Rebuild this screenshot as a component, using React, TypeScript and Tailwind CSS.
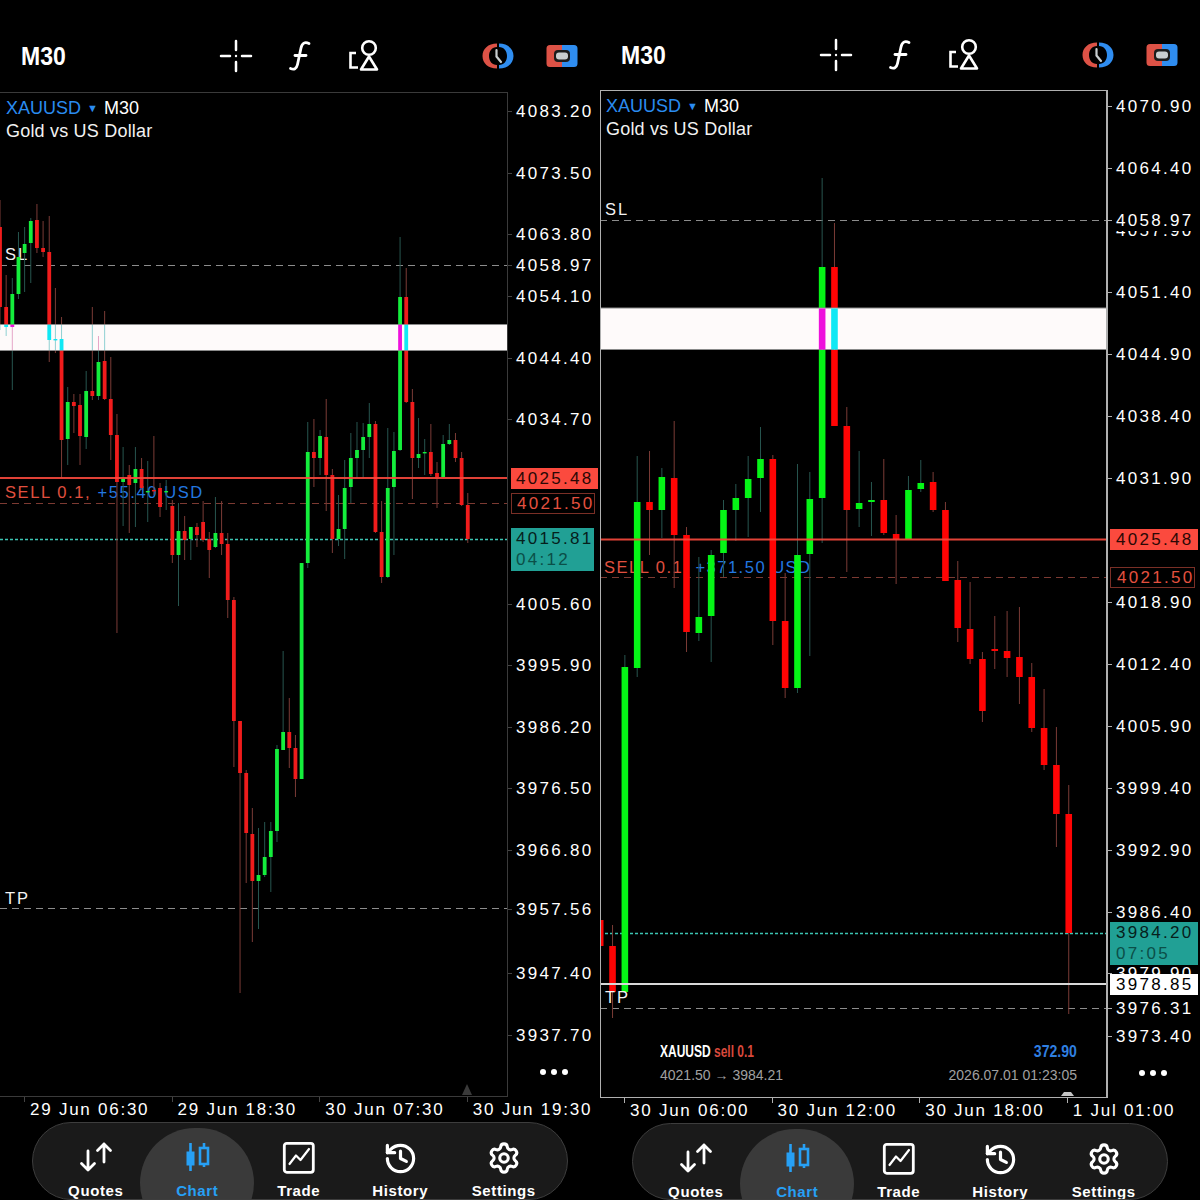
import { History, Settings } from "lucide-react";

type C = [number, "g" | "r", number, number, number, number];

const leftC: C[] = [
  [0,"r",227,307,200,330],[1,"r",307,327,275,336],[2,"g",294,327,278,390],[3,"g",257,294,232,299],[4,"g",244,253,227,292],
  [5,"g",221,243,218,283],[6,"r",220,248,204,253],[7,"r",248,252,221,257],[8,"r",252,340,216,362],[9,"r",339,340,288,353],
  [10,"r",339,440,317,478],[11,"g",402,439,387,465],[12,"r",402,406,394,433],[13,"r",405,436,394,465],[14,"g",391,437,371,449],
  [15,"r",391,396,307,400],[16,"g",362,396,336,400],[17,"r",361,399,311,400],[18,"r",399,435,357,460],[19,"r",435,482,414,633],
  [20,"g",479,482,447,526],[21,"r",475,485,465,533],[22,"g",469,483,447,527],[23,"r",469,488,458,490],[24,"g",491,492,461,522],
  [25,"r",490,491,436,495],[26,"r",488,507,483,517],[27,"g",491,492,480,510],[28,"r",506,555,500,563],[29,"g",531,555,503,606],
  [30,"r",531,540,516,560],[31,"g",527,539,527,560],[32,"r",527,535,523,547],[33,"r",522,540,501,542],[34,"r",539,550,532,578],
  [35,"g",533,547,497,548],[36,"r",533,544,501,555],[37,"r",544,600,533,618],[38,"r",600,721,597,767],[39,"r",721,773,721,993],
  [40,"r",773,833,770,883],[41,"r",834,881,808,942],[42,"g",875,881,828,929],[43,"g",857,875,822,877],[44,"g",831,857,822,892],
  [45,"g",749,831,745,842],[46,"g",732,750,651,750],[47,"r",732,748,698,768],[48,"r",748,779,735,797],[49,"g",563,779,563,779],
  [50,"g",452,563,422,568],[51,"r",452,458,419,487],[52,"g",436,458,430,475],[53,"r",437,475,399,511],[54,"r",475,539,469,553],
  [55,"g",529,539,495,546],[56,"g",488,529,460,559],[57,"g",458,487,433,503],[58,"g",450,458,422,478],[59,"g",437,450,423,478],
  [60,"g",424,437,403,458],[61,"r",424,532,421,533],[62,"r",532,577,501,583],[63,"g",488,577,428,578],[64,"g",451,487,432,555],
  [65,"g",297,450,237,451],[66,"r",297,402,268,403],[67,"r",402,458,389,499],[68,"g",454,458,418,468],[69,"g",452,453,439,475],
  [70,"r",452,474,424,476],[71,"r",473,477,462,508],[72,"g",444,477,435,478],[73,"g",440,444,424,445],[74,"r",440,458,433,462],
  [75,"r",458,505,452,506],[76,"r",505,539,493,543],
];

const rightX = (j: number) => 600.2 + j * 12.33;
const rightC: C[] = [
  [0,"r",920,946,915,950],[1,"r",946,992,925,1018],[2,"g",667,992,655,992],[3,"g",502,668,456,677],[4,"r",502,510,451,555],
  [5,"g",477,510,468,538],[6,"r",478,535,421,588],[7,"r",535,632,527,652],[8,"g",617,633,557,641],[9,"g",555,616,550,662],
  [10,"g",510,553,500,577],[11,"g",498,510,484,541],[12,"g",479,498,456,537],[13,"g",459,478,427,512],[14,"r",459,621,455,645],
  [15,"r",621,688,573,698],[16,"g",555,688,464,693],[17,"g",499,554,472,656],[18,"g",267,498,178,543],[19,"r",267,426,223,426],
  [20,"r",426,510,407,572],[21,"g",503,509,451,527],[22,"g",500,502,482,536],[23,"r",500,533,459,535],[24,"r",534,539,515,584],
  [25,"g",490,539,476,539],[26,"g",483,489,460,492],[27,"r",482,510,472,512],[28,"r",510,581,502,581],[29,"r",580,628,561,642],
  [30,"r",629,659,582,664],[31,"r",659,711,652,722],[32,"r",649,651,616,669],[33,"r",651,658,611,677],[34,"r",657,677,607,704],
  [35,"r",677,728,663,732],[36,"r",728,765,689,770],[37,"r",765,814,727,847],[38,"r",814,933,785,1014],
];

type Kind = "plain" | "sell" | "entry" | "teal" | "white";
type L = { y: number; t: string; k?: Kind; s?: string; w?: number };

const leftAxis: L[] = [
  { y: 111, t: "4083.20" },{ y: 173, t: "4073.50" },{ y: 234, t: "4063.80" },{ y: 265.5, t: "4058.97" },{ y: 296, t: "4054.10" },
  { y: 358, t: "4044.40" },{ y: 419, t: "4034.70" },{ y: 604, t: "4005.60" },{ y: 665, t: "3995.90" },{ y: 727, t: "3986.20" },
  { y: 788, t: "3976.50" },{ y: 850, t: "3966.80" },{ y: 909, t: "3957.56" },{ y: 973, t: "3947.40" },{ y: 1035, t: "3937.70" },
  { y: 478, t: "4025.48", k: "sell", w: 87 },{ y: 503.5, t: "4021.50", k: "entry", w: 84 },
  { y: 539, t: "4015.81", k: "teal", s: "04:12", w: 83 },
];
const rightAxis: L[] = [
  { y: 230, t: "4057.90" },{ y: 106, t: "4070.90" },{ y: 168, t: "4064.40" },{ y: 220, t: "4058.97" },{ y: 292, t: "4051.40" },
  { y: 354, t: "4044.90" },{ y: 416, t: "4038.40" },{ y: 478, t: "4031.90" },{ y: 602, t: "4018.90" },{ y: 664, t: "4012.40" },
  { y: 726, t: "4005.90" },{ y: 788, t: "3999.40" },{ y: 850, t: "3992.90" },{ y: 912, t: "3986.40" },{ y: 973, t: "3979.90" },
  { y: 1008, t: "3976.31" },{ y: 1036, t: "3973.40" },
  { y: 539.5, t: "4025.48", k: "sell", w: 88 },{ y: 577.5, t: "4021.50", k: "entry", w: 85 },
  { y: 933, t: "3984.20", k: "teal", s: "07:05", w: 88 },{ y: 984, t: "3978.85", k: "white", w: 88 },
];

function Crosshair() {
  return (
    <svg width="40" height="40" viewBox="0 0 40 40" fill="none" stroke="#fff" strokeWidth="2.5" strokeLinecap="round">
      <path d="M5 20H14M26 20H35M20 5V14M20 26V35" />
      <circle cx="20" cy="20" r="1.2" fill="#fff" stroke="none" />
    </svg>
  );
}
function Fx() {
  return (
    <svg width="40" height="40" viewBox="0 0 40 40" fill="none" stroke="#fff" strokeWidth="2.8" strokeLinecap="round">
      <path d="M29 7.500C25 5.500 22 7 21 12L17.500 28.500C16.500 33 14 34 10.500 32.500" />
      <path d="M15 19.500H26" />
    </svg>
  );
}
function Objects() {
  return (
    <svg width="40" height="40" viewBox="0 0 40 40" fill="none" stroke="#fff" strokeWidth="2.6">
      <circle cx="26" cy="12" r="6.800" />
      <path d="M26 20.500L34 33.500H18Z" strokeLinejoin="round" />
      <path d="M13 17H7.500V31.500H15" />
    </svg>
  );
}
function ClockBadge() {
  return (
    <svg width="40" height="40" viewBox="0 0 40 40" fill="none">
      <path d="M19 7.500C10 7.500 4.500 13 4.500 20C4.500 27 10 32.500 19 32.500L19 29C14 29 11 25 11 20C11 15 14 11 19 11Z" fill="#dd5246" />
      <path d="M21 7.500C30 7.500 35.500 13 35.500 20C35.500 27 30 32.500 21 32.500L21 29C26 29 29 25 29 20C29 15 26 11 21 11Z" fill="#2f8df0" />
      <path d="M18.500 14V20.500L23 26" stroke="#c9ced0" strokeWidth="2.200" strokeLinecap="round" />
    </svg>
  );
}
function ToggleBadge() {
  return (
    <svg width="40" height="40" viewBox="0 0 40 40">
      <path d="M9 9H21V31H9A3.500 3.500 0 0 1 5.500 27.500V12.500A3.500 3.500 0 0 1 9 9Z" fill="#dd5246" />
      <path d="M21 9H33A3.500 3.500 0 0 1 36.500 12.500V27.500A3.500 3.500 0 0 1 33 31H21Z" fill="#2f8df0" />
      <rect x="13" y="14" width="16" height="12" rx="4" fill="#1c1c1c" />
      <rect x="15" y="16.500" width="12" height="7" rx="3" fill="#c9ced0" />
    </svg>
  );
}
function QuotesIcon() {
  return (
    <svg width="36" height="34" viewBox="0 0 36 34" fill="none" stroke="#fff" strokeWidth="2.800" strokeLinecap="round" strokeLinejoin="round">
      <path d="M10 10V29M3.500 22.500L10 29L16.500 22.500" />
      <path d="M26 3V21M19.500 9.500L26 3L32.500 9.500" />
    </svg>
  );
}
function ChartIcon() {
  return (
    <svg width="36" height="34" viewBox="0 0 36 34" fill="none" stroke="#27a0f5" strokeWidth="2.600">
      <path d="M11.500 2V30M25 2V26" />
      <rect x="7.500" y="10.500" width="8" height="14" fill="#27a0f5" stroke="none" />
      <rect x="21" y="7" width="8" height="16" fill="#3a3a3a" />
    </svg>
  );
}
function TradeIcon() {
  return (
    <svg width="36" height="34" viewBox="0 0 36 34" fill="none" stroke="#fff" strokeWidth="2.800" strokeLinejoin="round">
      <rect x="3.300" y="2.300" width="29" height="29" rx="2.500" />
      <path d="M8.500 23L15 14.500L19.500 19L28 8" strokeLinecap="round" strokeWidth="2.200" />
    </svg>
  );
}

const navItems = [
  { label: "Quotes", icon: <QuotesIcon />, cls: "relative w-[101.500px] flex flex-col items-center pt-[18px]" },
  { label: "Chart", icon: <ChartIcon />, active: true, cls: "relative w-[101.500px] flex flex-col items-center pt-[18px]" },
  { label: "Trade", icon: <TradeIcon />, cls: "relative w-[101.500px] flex flex-col items-center pt-[18px]" },
  { label: "History", icon: <History size={35} strokeWidth={2.2} color="#fff" />, cls: "relative w-[101.500px] flex flex-col items-center pt-[18px]" },
  { label: "Settings", icon: <Settings size={34} strokeWidth={2.2} color="#fff" />, cls: "relative w-[101.500px] ml-[2px] flex flex-col items-center pt-[18px]" },
];

function BottomNav() {
  return (
    <div className="mx-[32px] w-[536px] h-[120px] rounded-[58px] bg-[#1a1a1a] border border-[#3d3d3d] pl-[12px] flex overflow-hidden">
      {navItems.map((n) => (
        <div key={n.label} className={n.cls}>
          {n.active && <div className="absolute top-[5px] left-[-6.500px] w-[114px] h-[110px] rounded-[57px] bg-[#3a3a3a]" />}
          <div className="relative h-[34px] flex items-center justify-center">{n.icon}</div>
          <div className={n.active ? "relative mt-[6px] text-[15px] leading-[20px] font-bold tracking-[0.6px] text-[#27a0f5]" : "relative mt-[6px] text-[15px] leading-[20px] font-bold tracking-[0.6px] text-white"}>
            {n.label}
          </div>
        </div>
      ))}
    </div>
  );
}

function AxisLabel({ l, top, tick, tagLeft, tagPad }: { l: L; top: number; tick: string; tagLeft: string; tagPad: string }) {
  const base = "absolute whitespace-nowrap text-[17px] tracking-[2.300px]";
  if (l.k === "teal") {
    return (
      <div className={`${base} ${tagLeft} ${tagPad} bg-[#21a095] text-[#06201c] h-[43px] leading-[21px]`} style={{ top: l.y - top - 11, width: l.w }}>
        <div>{l.t}</div>
        <div className="text-[#0b4f48]">{l.s}</div>
      </div>
    );
  }
  if (l.k) {
    const c =
      l.k === "sell" ? "bg-[#fb4a3e] text-[#2a0805]" : l.k === "entry" ? "bg-black border border-[#7a2f26] text-[#e4503f]" : "bg-white text-black";
    return (
      <div className={`${base} ${tagLeft} ${tagPad} ${c} h-[21px] leading-[21px] flex items-center`} style={{ top: l.y - top - 10.5, width: l.w }}>
        {l.t}
      </div>
    );
  }
  return (
    <div className={`${base} left-0 pl-[8px] pr-[1px] bg-black text-white h-[21px] leading-[21px]`} style={{ top: l.y - top - 10.5 }}>
      <div className={`absolute left-0 top-[10px] w-[4px] h-px ${tick}`} />
      {l.t}
    </div>
  );
}

function Candles({ data, x, bw, pid, band }: { data: C[]; x: (i: number) => number; bw: number; pid: string; band: [number, number] }) {
  const red = pid === "l" ? "#f01c1c" : "#ff0404";
  const green = pid === "l" ? "#14ee3c" : "#05f516";
  return (
    <>
      {data.map(([i, c, t, b, wt, wb]) => (
        <g key={i}>
          <rect x={x(i) - 0.5} y={wt} width={1} height={wb - wt} fill={c === "r" ? "#7a3b36" : "#27554f"} />
          <rect x={x(i) - bw / 2} y={t} width={bw} height={Math.max(b - t, 1.4)} fill={c === "r" ? red : green} />
        </g>
      ))}
      <rect x={-10} y={band[0]} width={1300} height={band[1] - band[0]} fill="#fefafa" stroke="#8a8a8a" strokeWidth={1} />
      <g clipPath={`url(#band-${pid})`}>
        {data.map(([i, c, t, b, wt, wb]) => (
          <g key={i}>
            <rect x={x(i) - 0.5} y={wt} width={1} height={wb - wt} fill={c === "r" ? "#8fd0d2" : "#e6a6c8"} />
            <rect x={x(i) - bw / 2} y={t} width={bw} height={Math.max(b - t, 1.4)} fill={c === "r" ? "#10e8f4" : "#ee10dc"} />
          </g>
        ))}
      </g>
    </>
  );
}

function LeftPanel() {
  const top = 92;
  const x = (i: number) => i * 6.155;
  return (
    <div className="w-[600px] h-[1200px] flex flex-col shrink-0">
      <Header pt="pt-[36px]" h="h-[92px]" />
      <div className="flex h-[1005px]">
        <div className="relative w-[508px] h-[1005px] border border-l-0 border-[#3a3a3a] overflow-hidden">
          <div className="absolute left-[6px] top-[3px] text-[18px] leading-[24px] whitespace-nowrap text-white">
            <span className="text-[#2a8cf0]">XAUUSD</span>
            <span className="text-[#2a8cf0] text-[11px] mx-[6px] align-[2px]">▼</span>
            <span>M30</span>
          </div>
          <div className="absolute left-[6px] top-[26px] text-[18px] leading-[24px] tracking-[0.2px] whitespace-nowrap text-[#f2f2f2]">Gold vs US Dollar</div>
          <div className="absolute left-[5px] top-[151px] text-[16.500px] leading-[20px] tracking-[2px] text-[#f2f2f2]">SL</div>
          <div className="absolute left-[5px] top-[795px] text-[16.500px] leading-[20px] tracking-[2px] text-[#f2f2f2]">TP</div>
          <div className="absolute left-[5px] top-[389px] text-[16.500px] leading-[20px] tracking-[1.600px] whitespace-nowrap">
            <span className="text-[#e0503f]">SELL 0.1, </span>
            <span className="text-[#2378e0]">+55.40 USD</span>
          </div>
          <svg className="absolute left-0 top-[-1px]" width="507" height="1005" viewBox={`0 ${top} 507 1005`}>
            <defs>
              <clipPath id="band-l"><rect x="0" y="325" width="507" height="25" /></clipPath>
            </defs>
            <path d="M0 265.500H507" stroke="#8c8c8c" strokeDasharray="7 5" />
            <path d="M0 908.500H507" stroke="#8c8c8c" strokeDasharray="7 5" />
            <path d="M0 503.500H507" stroke="#7c3a32" strokeDasharray="7 5" />
            <path d="M0 539.500H507" stroke="#3cc4b2" strokeDasharray="3 2" strokeWidth="1.300" />
            <Candles data={leftC} x={x} bw={3.8} pid="l" band={[324.5, 350.5]} />
            <path d="M0 478H507" stroke="#f5483c" strokeWidth="2" opacity="0.92" />
            <path d="M462 1095L467 1084L472 1095Z" fill="#3a3a3a" />
          </svg>
        </div>
        <div className="relative w-[92px] h-[1005px]">
          {leftAxis.map((l) => (
            <AxisLabel key={l.t} l={l} top={top} tick="bg-[#444]" tagLeft="left-[3px]" tagPad="pl-[5px]" />
          ))}
          <div className="absolute left-[32px] top-[977px] flex gap-[5.500px]">
            <div className="w-[5.500px] h-[5.500px] rounded-full bg-white" />
            <div className="w-[5.500px] h-[5.500px] rounded-full bg-white" />
            <div className="w-[5.500px] h-[5.500px] rounded-full bg-white" />
          </div>
        </div>
      </div>
      <TimeAxis ticks={["29 Jun 06:30", "29 Jun 18:30", "30 Jun 07:30", "30 Jun 19:30"]} tick="bg-[#444]" />
      <BottomNav />
    </div>
  );
}

function RightPanel() {
  const top = 90;
  return (
    <div className="w-[600px] h-[1200px] flex flex-col shrink-0">
      <Header pt="pt-[35px]" h="h-[90px]" />
      <div className="flex h-[1008px]">
        <div className="relative w-[508px] h-[1008px] border border-[#b0b0b0] border-r-2 overflow-hidden">
          <div className="absolute left-[5px] top-[3px] text-[18px] leading-[24px] whitespace-nowrap text-white">
            <span className="text-[#2a8cf0]">XAUUSD</span>
            <span className="text-[#2a8cf0] text-[11px] mx-[6px] align-[2px]">▼</span>
            <span>M30</span>
          </div>
          <div className="absolute left-[5px] top-[26px] text-[18px] leading-[24px] tracking-[0.2px] whitespace-nowrap text-[#f2f2f2]">Gold vs US Dollar</div>
          <div className="absolute left-[4px] top-[108px] text-[16.500px] leading-[20px] tracking-[2px] text-[#f2f2f2]">SL</div>
          <div className="absolute left-[3px] top-[466px] text-[16.500px] leading-[20px] tracking-[1.500px] whitespace-nowrap">
            <span className="text-[#e0503f]">SELL 0.1, </span>
            <span className="text-[#2378e0]">+371.50 USD</span>
          </div>
          <div className="absolute left-[59px] top-[951px] w-[417px] flex justify-between items-center h-[20px] text-[16px]">
            <div className="whitespace-nowrap origin-left scale-x-[0.75] font-bold">
              <span className="text-white">XAUUSD </span>
              <span className="text-[#d8493c]">sell 0.1</span>
            </div>
            <div className="whitespace-nowrap origin-right scale-x-[0.88] text-[#2f7fe0] font-bold">372.90</div>
          </div>
          <div className="absolute left-[59px] top-[974px] w-[417px] flex justify-between items-center h-[20px] text-[14px] text-[#a0a0a0]">
            <div className="whitespace-nowrap">4021.50 → 3984.21</div>
            <div className="whitespace-nowrap">2026.07.01 01:23:05</div>
          </div>
          <svg className="absolute left-[-1px] top-[-1px]" width="508" height="1008" viewBox={`600 ${top} 508 1008`}>
            <defs>
              <clipPath id="band-r"><rect x="600" y="308.500" width="507" height="41" /></clipPath>
            </defs>
            <path d="M600 220.500H1107" stroke="#8c8c8c" strokeDasharray="7 5" />
            <path d="M600 1008.500H1107" stroke="#8c8c8c" strokeDasharray="7 5" />
            <path d="M600 577.500H1107" stroke="#7c3a32" strokeDasharray="7 5" />
            <path d="M600 933.500H1107" stroke="#3cc4b2" strokeDasharray="3 2" strokeWidth="1.300" />
            <Candles data={rightC} x={rightX} bw={6.6} pid="r" band={[308, 349.500]} />
            <path d="M600 539.500H1107" stroke="#f5483c" strokeWidth="2" opacity="0.92" />
            <path d="M600 984H1107" stroke="#d8d8d8" strokeWidth="2" />
            <path d="M1061 1096L1064 1092H1071L1074 1096Z" fill="#c4c4c4" />
          </svg>
          <div className="absolute left-[4px] top-[896px] text-[16.500px] leading-[20px] tracking-[2px] text-[#f2f2f2]">TP</div>
        </div>
        <div className="relative w-[92px] h-[1008px]">
          {rightAxis.map((l) => (
            <AxisLabel key={l.t} l={l} top={top} tick="bg-[#b0b0b0]" tagLeft="left-[2px]" tagPad="pl-[6px]" />
          ))}
          <div className="absolute left-[31px] top-[980px] flex gap-[5.500px]">
            <div className="w-[5.500px] h-[5.500px] rounded-full bg-white" />
            <div className="w-[5.500px] h-[5.500px] rounded-full bg-white" />
            <div className="w-[5.500px] h-[5.500px] rounded-full bg-white" />
          </div>
        </div>
      </div>
      <TimeAxis ticks={["30 Jun 06:00", "30 Jun 12:00", "30 Jun 18:00", "1 Jul 01:00"]} tick="bg-[#b0b0b0]" />
      <BottomNav />
    </div>
  );
}

function Header({ pt, h }: { pt: string; h: string }) {
  return (
    <div className={`flex shrink-0 ${pt} ${h}`}>
      <div className="w-[216px] h-[40px] pl-[21px] text-[25px] leading-[40px] font-bold text-white">
        <div className="origin-left scale-x-[0.92]">M30</div>
      </div>
      <div className="flex gap-[23.500px]">
        <Crosshair />
        <Fx />
        <Objects />
      </div>
      <div className="flex gap-[23px] ml-[95px]">
        <ClockBadge />
        <ToggleBadge />
      </div>
    </div>
  );
}

function TimeAxis({ ticks, tick }: { ticks: string[]; tick: string }) {
  return (
    <div className="flex pl-[24px] h-[25px] shrink-0">
      {ticks.map((t) => (
        <div key={t} className="w-[147.600px] flex flex-col shrink-0">
          <div className={`w-px h-[5px] ${tick}`} />
          <div className="pl-[6px] mt-[-2px] text-[17px] leading-[20px] tracking-[1.750px] whitespace-nowrap text-white">{t}</div>
        </div>
      ))}
    </div>
  );
}

export default function App() {
  return (
    <div className="w-[1200px] h-[1200px] bg-black flex overflow-hidden [font-family:'Liberation_Sans',sans-serif]">
      <LeftPanel />
      <RightPanel />
    </div>
  );
}
